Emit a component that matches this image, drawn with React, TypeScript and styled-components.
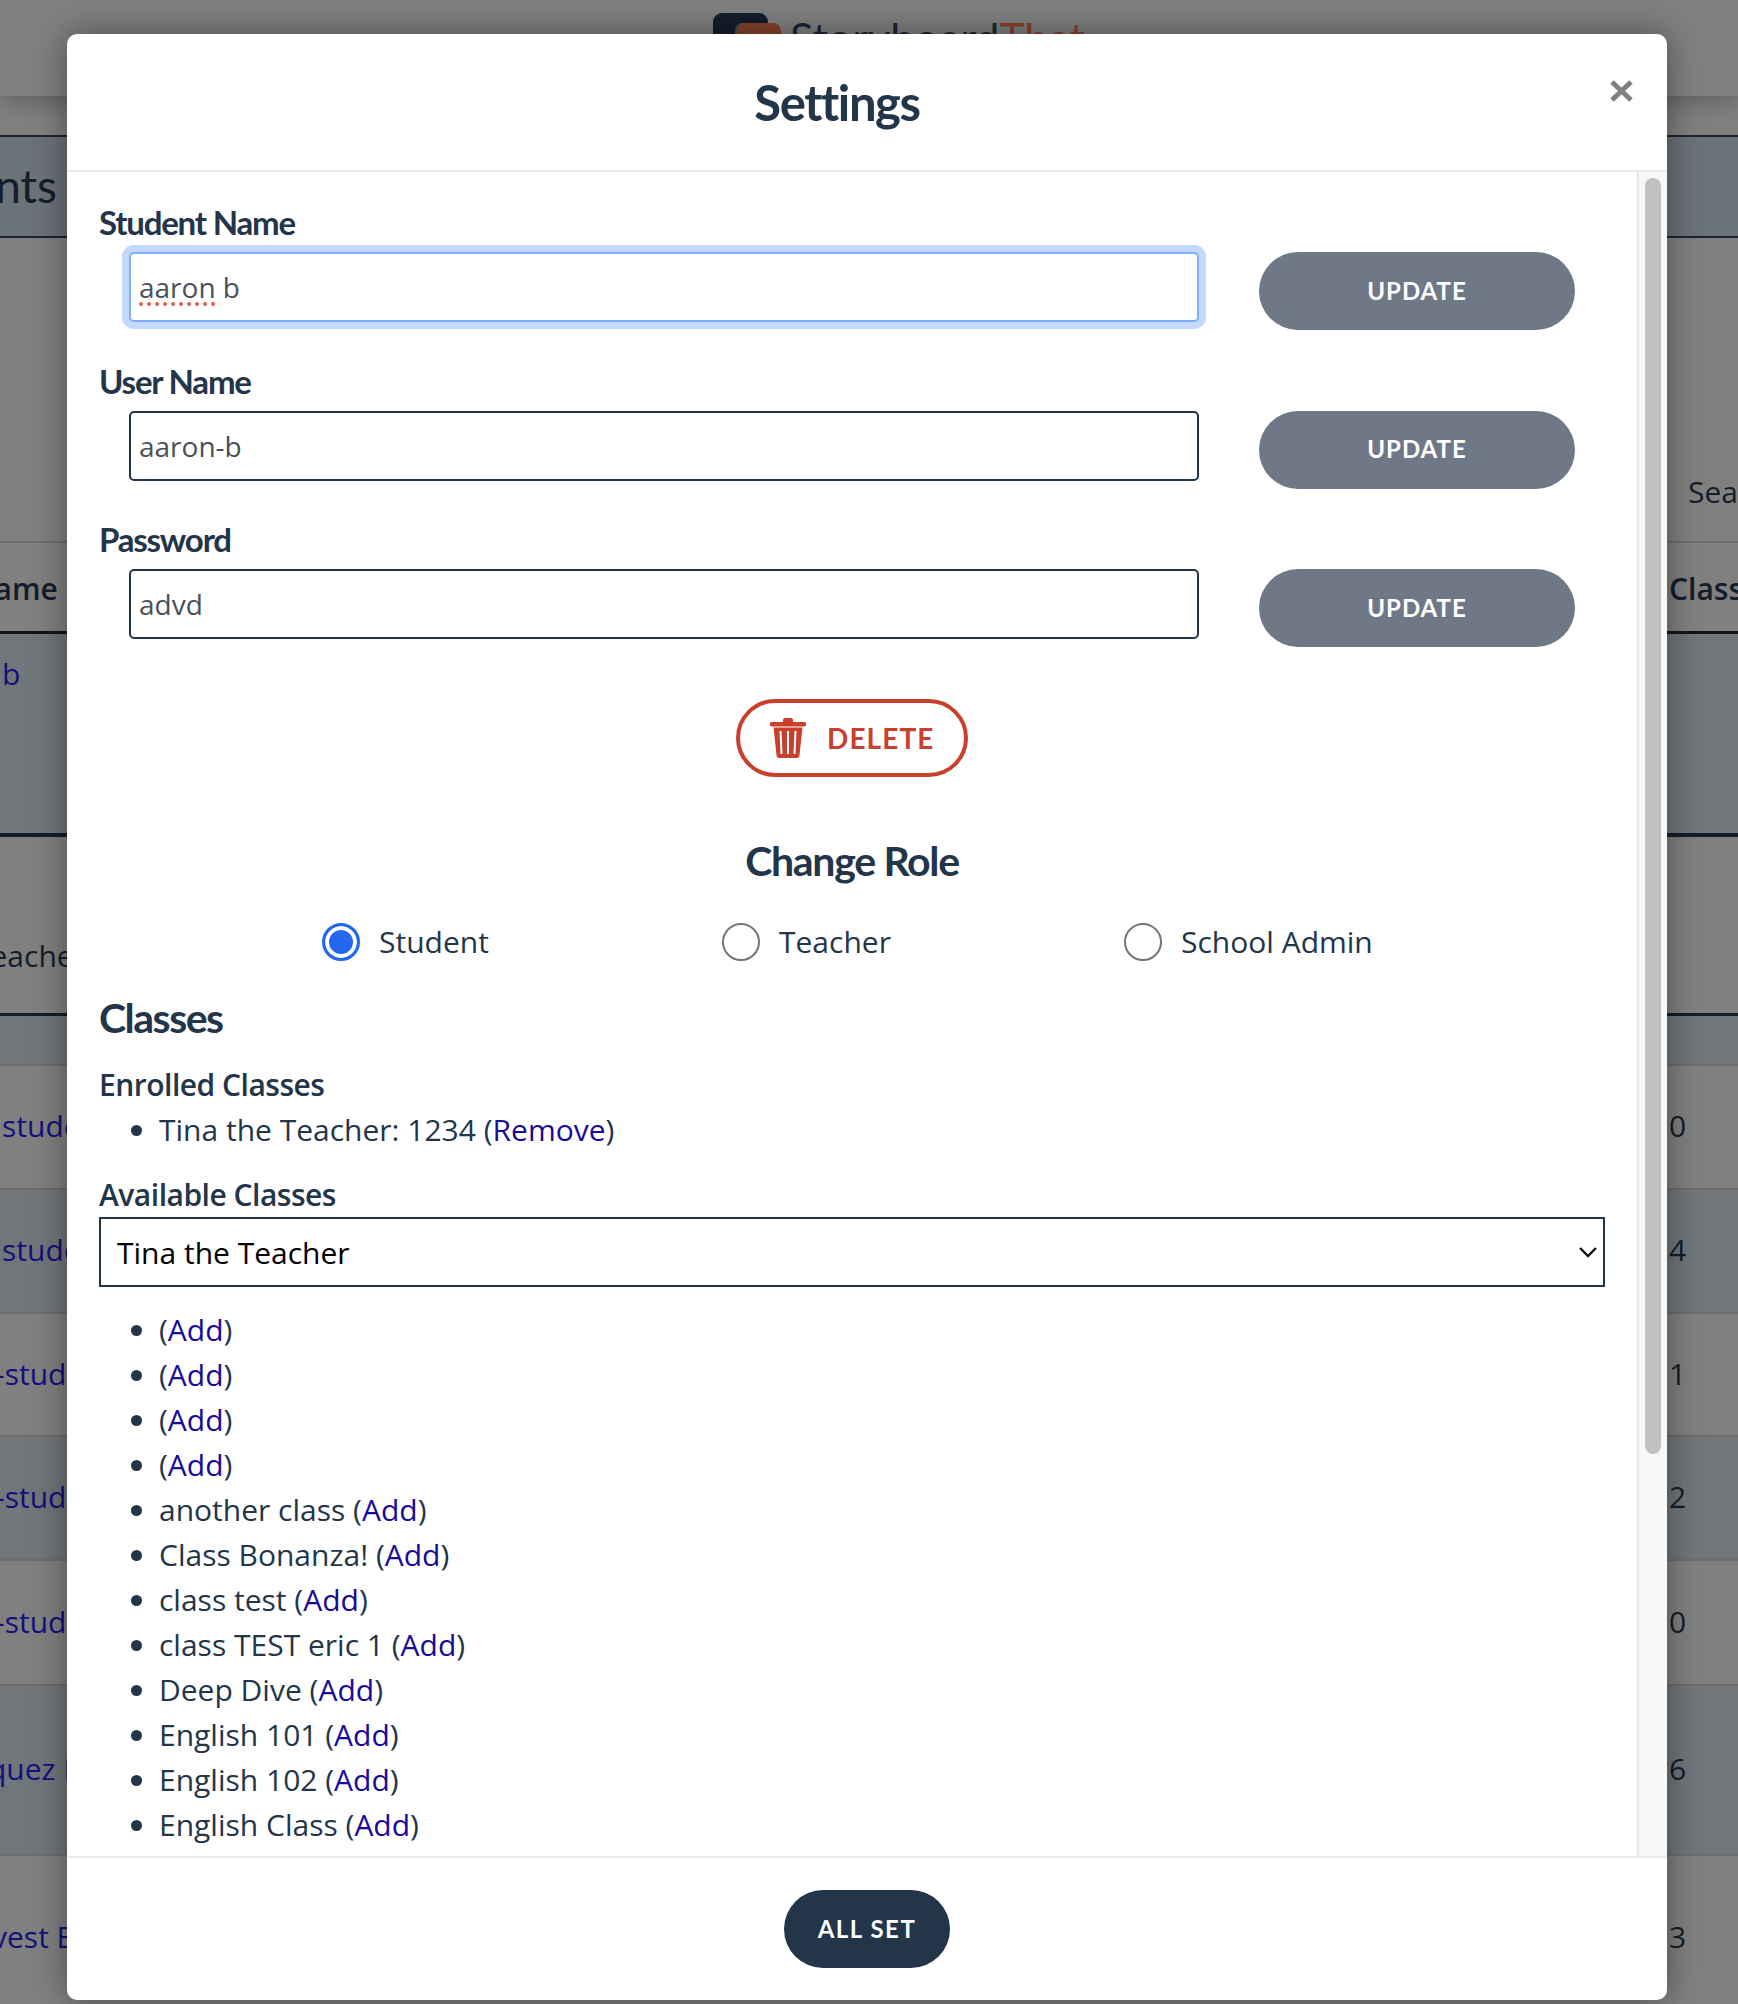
import React from "react"
import styled, { createGlobalStyle } from "styled-components"

const GlobalStyle = createGlobalStyle`
  html, body {
    margin: 0;
    padding: 0;
    background: #808080;
  }
  * {
    box-sizing: border-box;
  }
`

const SPage = styled.div`
  position: relative;
  width: 1738px;
  height: 2004px;
  overflow: hidden;
  font-family: "Open Sans", sans-serif;
  font-size: 30px;
  line-height: 45px;
  color: #141d2b;
`

const SNav = styled.div`
  position: relative;
  z-index: 1;
  height: 96px;
  padding: 13px 0 0 713px;
  display: flex;
  align-items: flex-start;
  background: #808080;
  box-shadow: 0 4px 24px rgba(0, 0, 0, 0.28);
`

const SLogoMark = styled.div`
  position: relative;
  width: 55px;
  height: 60px;
  margin-right: 22px;
  border-radius: 9px;
  background: #141d2b;
`

const SLogoInner = styled.div`
  position: absolute;
  top: 10px;
  left: 22px;
  width: 46px;
  height: 40px;
  border-radius: 8px;
  background: #83432c;
  border-left: 3px solid #4b4b4b;
`

const SLogoText = styled.div`
  margin-top: 2px;
  font-family: Lato, sans-serif;
  font-size: 43.2px;
  line-height: 44px;
  color: #1b2634;
`

const SLogoAccent = styled.span`
  color: #83432c;
`

const SBanner = styled.div`
  height: 103px;
  margin-top: 39px;
  padding-bottom: 2px;
  display: flex;
  align-items: center;
  justify-content: flex-start;
  border-top: 2px solid #1a2533;
  border-bottom: 2px solid #1a2533;
  background: #6b7278;
`

const SBannerTitle = styled.div`
  width: 57px;
  display: flex;
  justify-content: flex-end;
  white-space: nowrap;
  font-family: Lato, sans-serif;
  font-size: 46px;
  line-height: 50px;
`

const SSearchRow = styled.div`
  height: 305px;
  padding: 231px 0 0 1688px;
  border-bottom: 2px solid #6e6e6e;
  white-space: nowrap;
`

const STableRow = styled.div<{ $height: number; $band?: boolean; $line?: string; $pad?: string }>`
  height: ${(p) => p.$height}px;
  padding: ${(p) => p.$pad || "0 0 3px"};
  display: flex;
  align-items: center;
  white-space: nowrap;
  background: ${(p) => (p.$band ? "#71767a" : "#808080")};
  border-bottom: ${(p) => p.$line || "2px solid #6e6e6e"};
`

const SLeftCell = styled.div<{ $shift?: number; $link?: boolean; $strong?: boolean }>`
  width: ${(p) => 1669 - (p.$shift || 0)}px;
  margin-left: ${(p) => p.$shift || 0}px;
  flex-shrink: 0;
  color: ${(p) => (p.$link ? "#14107a" : "#141d2b")};
  font-weight: ${(p) => (p.$strong ? 600 : 400)};
`

const SRightCell = styled.div<{ $strong?: boolean }>`
  flex: 1;
  font-weight: ${(p) => (p.$strong ? 600 : 400)};
`

const SModal = styled.div`
  position: absolute;
  z-index: 2;
  top: 34px;
  left: 67px;
  width: 1600px;
  height: 1966px;
  display: flex;
  flex-direction: column;
  border-radius: 10px;
  background: #ffffff;
  color: #233549;
  box-shadow: 0 0 34px rgba(0, 0, 0, 0.42);
`

const SModalHeader = styled.div`
  position: relative;
  flex-shrink: 0;
  height: 138px;
  padding-right: 60px;
  display: flex;
  align-items: center;
  justify-content: center;
  border-bottom: 2px solid #e8eaed;
`

const STitle = styled.h1`
  margin: 0;
  font-family: Lato, sans-serif;
  font-size: 49px;
  font-weight: 700;
  letter-spacing: -1.4px;
  line-height: 60px;
`

const SClose = styled.button`
  position: absolute;
  top: 45px;
  right: 33px;
  width: 25px;
  height: 24px;
  padding: 0;
  border: 0;
  background: none;
  display: flex;
  cursor: pointer;
`

const SModalMiddle = styled.div`
  flex: 1;
  min-height: 0;
  display: flex;
`

const SModalBody = styled.div`
  flex: 1;
  min-width: 0;
  padding: 34px 32px 0;
  overflow: hidden;
`

const SScrollTrack = styled.div`
  flex-shrink: 0;
  width: 30px;
  padding: 6px 6px 0;
  background: #f8f8f8;
  border-left: 2px solid #e8e8e8;
`

const SScrollThumb = styled.div`
  height: 1276px;
  border-radius: 8px;
  background: #c1c1c1;
`

const SFieldLabel = styled.label`
  display: block;
  height: 48px;
  margin-top: -5px;
  padding-bottom: 5px;
  font-family: Lato, sans-serif;
  font-size: 33px;
  font-weight: 700;
  line-height: 43px;
  letter-spacing: -1.2px;
`

const SFieldRow = styled.div`
  display: flex;
  align-items: flex-start;
  gap: 60px;
  height: 78px;
  margin-top: 3px;
  margin-bottom: 34.5px;
  padding-left: 30px;
`

const SInputWrap = styled.div`
  position: relative;
  width: 1070px;
`

const SInput = styled.input<{ $focused?: boolean }>`
  display: block;
  width: 100%;
  height: 70px;
  padding: 0 8px;
  border: 2px solid ${(p) => (p.$focused ? "#80b0fb" : "#233549")};
  border-radius: 5px;
  outline: none;
  background: #fff;
  color: #495057;
  font-family: "Open Sans", sans-serif;
  font-size: 28px;
  box-shadow: ${(p) => (p.$focused ? "0 0 0 7px #c3d8fc" : "none")};
`

const SSpellMark = styled.div`
  position: absolute;
  top: 50px;
  left: 10px;
  width: 76px;
  height: 4px;
  background: radial-gradient(circle at 2px 2px, #f0614f 1.7px, transparent 2px) 0 0 / 8px 4px repeat-x;
`

const SUpdateButton = styled.button`
  width: 316px;
  height: 78px;
  padding: 0 0 2px;
  border: 0;
  border-radius: 39px;
  background: #6f7887;
  color: #fff;
  font-family: Lato, sans-serif;
  font-size: 24px;
  font-weight: 700;
  letter-spacing: 1px;
  cursor: pointer;
`

const SDeleteRow = styled.div`
  display: flex;
  justify-content: center;
  margin-top: 52px;
`

const SDeleteButton = styled.button`
  display: flex;
  align-items: center;
  width: 232px;
  height: 78px;
  padding: 0 0 0 30px;
  border: 4px solid #c8402e;
  border-radius: 39px;
  background: #fff;
  color: #c8402e;
  font-family: Lato, sans-serif;
  font-size: 28px;
  font-weight: 700;
  letter-spacing: 1.1px;
  cursor: pointer;
`

const SDeleteLabel = styled.span`
  margin-left: 21px;
`

const SRoleHeading = styled.h2`
  margin: 59px 0 0;
  text-align: center;
  font-family: Lato, sans-serif;
  font-size: 41px;
  font-weight: 700;
  line-height: 50px;
  letter-spacing: -1.3px;
`

const SRoleRow = styled.div`
  display: grid;
  grid-template-columns: 400px 402px 1fr;
  margin-top: 33px;
  padding-left: 223px;
`

const SRoleOption = styled.label`
  display: flex;
  align-items: center;
  gap: 19px;
`

const SRadio = styled.input`
  appearance: none;
  width: 38px;
  height: 38px;
  margin: 0;
  border: 2px solid #757575;
  border-radius: 50%;
  background: #fff;

  &:checked {
    border: 3px solid #2468f2;
    background: #2468f2;
    box-shadow: inset 0 0 0 4px #fff;
  }
`

const SClassesHeading = styled.h2`
  margin: 29px 0 0;
  font-family: Lato, sans-serif;
  font-size: 41px;
  font-weight: 700;
  line-height: 50px;
  letter-spacing: -1.5px;
`

const SSubHeading = styled.h3`
  margin: 0;
  font-size: 30px;
  font-weight: 600;
  line-height: 45px;
  letter-spacing: -0.5px;
`

const SEnrolledHeading = styled(SSubHeading)`
  margin-top: 19px;
`

const SList = styled.ul`
  margin: 0;
  padding: 0 0 0 60px;
  list-style: disc;
`

const SLink = styled.a`
  color: #1a0a9a;
  text-decoration: none;
`

const SAvailableHeading = styled(SSubHeading)`
  margin-top: 20px;
`

const SSelectBox = styled.div`
  display: flex;
  align-items: center;
  justify-content: space-between;
  width: 1506px;
  height: 70px;
  margin-bottom: 19.5px;
  padding: 0 5px 0 16px;
  border: 2px solid #233549;
  color: #000;
`

const SModalFooter = styled.div`
  flex-shrink: 0;
  height: 144px;
  display: flex;
  align-items: center;
  justify-content: center;
  border-top: 2px solid #e8eaed;
`

const SAllSetButton = styled.button`
  width: 166px;
  height: 78px;
  padding: 0 0 2px;
  border: 0;
  border-radius: 39px;
  background: #233549;
  color: #fff;
  font-family: Lato, sans-serif;
  font-size: 24px;
  font-weight: 700;
  letter-spacing: 1.5px;
  cursor: pointer;
`

const rows = [
  { height: 124, band: false, left: "student", right: "0", shift: 2 },
  { height: 124, band: true, left: "student", right: "4", shift: 2 },
  { height: 123, band: false, left: "-student", right: "1", shift: -5 },
  { height: 124, band: true, left: "-student", right: "2", shift: -5 },
  { height: 125, band: false, left: "-student", right: "0", shift: -5 },
  { height: 170, band: true, left: "quez Rodriguez", right: "6", shift: -12 },
]

const fields = [
  { label: "Student Name", value: "aaron b", focused: true },
  { label: "User Name", value: "aaron-b" },
  { label: "Password", value: "advd" },
]

const available = [
  "",
  "",
  "",
  "",
  "another class",
  "Class Bonanza!",
  "class test",
  "class TEST eric 1",
  "Deep Dive",
  "English 101",
  "English 102",
  "English Class",
]

function TrashIcon() {
  return (
    <svg width="36" height="40" viewBox="0 0 36 40" fill="#c8402e">
      <path d="M13 4V2a2 2 0 0 1 2-2h6a2 2 0 0 1 2 2v2h11a2 2 0 0 1 2 2.2 2 2 0 0 1-2 2.3H2A2 2 0 0 1 0 6.2 2 2 0 0 1 2 4z" />
      <path
        fillRule="evenodd"
        d="M3.5 9.5h29L29.5 37a3 3 0 0 1-3 3h-17a3 3 0 0 1-3-3zM9.5 13l1 23h2l-1-23zM17 13v23h2V13zM24.5 13l-1 23h2l1-23z"
      />
    </svg>
  )
}

export default function App() {
  return (
    <SPage>
      <GlobalStyle />
      <SNav>
        <SLogoMark>
          <SLogoInner />
        </SLogoMark>
        <SLogoText>
          Storyboard<SLogoAccent>That</SLogoAccent>
        </SLogoText>
      </SNav>
      <SBanner>
        <SBannerTitle>Students</SBannerTitle>
      </SBanner>
      <SSearchRow>Search</SSearchRow>
      <STableRow $height={91} $line="3px solid #10161f" $pad="2px 0 0">
        <SLeftCell $shift={-29} $strong>
          Name
        </SLeftCell>
        <SRightCell $strong>Class</SRightCell>
      </STableRow>
      <STableRow $height={203} $band $line="4px solid #141d2b" $pad="0 0 120px">
        <SLeftCell $shift={2} $link>
          b
        </SLeftCell>
      </STableRow>
      <STableRow $height={179} $line="3px solid #141d2b" $pad="60px 0 0">
        <SLeftCell $shift={-26}>Teacher</SLeftCell>
      </STableRow>
      <STableRow $height={50} $band />
      {rows.map((row, i) => (
        <STableRow key={i} $height={row.height} $band={row.band}>
          <SLeftCell $shift={row.shift} $link>
            {row.left}
          </SLeftCell>
          <SRightCell>{row.right}</SRightCell>
        </STableRow>
      ))}
      <STableRow $height={151} $line="none" $pad="10px 0 0">
        <SLeftCell $shift={-8} $link>
          vest Elementary
        </SLeftCell>
        <SRightCell>3</SRightCell>
      </STableRow>

      <SModal>
        <SModalHeader>
          <STitle>Settings</STitle>
          <SClose aria-label="Close">
            <svg width="25" height="24" viewBox="0 0 25 24">
              <path d="M3 3l19 18M22 3L3 21" stroke="#7f7f7f" strokeWidth="5" fill="none" />
            </svg>
          </SClose>
        </SModalHeader>
        <SModalMiddle>
          <SModalBody>
            {fields.map((field) => (
              <div key={field.label}>
                <SFieldLabel>{field.label}</SFieldLabel>
                <SFieldRow>
                  <SInputWrap>
                    <SInput $focused={field.focused} defaultValue={field.value} />
                    {field.focused && <SSpellMark />}
                  </SInputWrap>
                  <SUpdateButton>UPDATE</SUpdateButton>
                </SFieldRow>
              </div>
            ))}
            <SDeleteRow>
              <SDeleteButton>
                <TrashIcon />
                <SDeleteLabel>DELETE</SDeleteLabel>
              </SDeleteButton>
            </SDeleteRow>
            <SRoleHeading>Change Role</SRoleHeading>
            <SRoleRow>
              <SRoleOption>
                <SRadio type="radio" name="role" defaultChecked />
                Student
              </SRoleOption>
              <SRoleOption>
                <SRadio type="radio" name="role" />
                Teacher
              </SRoleOption>
              <SRoleOption>
                <SRadio type="radio" name="role" />
                School Admin
              </SRoleOption>
            </SRoleRow>
            <SClassesHeading>Classes</SClassesHeading>
            <SEnrolledHeading>Enrolled Classes</SEnrolledHeading>
            <SList>
              <li>
                Tina the Teacher: 1234 (<SLink href="#">Remove</SLink>)
              </li>
            </SList>
            <SAvailableHeading>Available Classes</SAvailableHeading>
            <SSelectBox>
              Tina the Teacher
              <svg width="20" height="12" viewBox="0 0 20 12">
                <path d="M2 2l8 8 8-8" stroke="#111" strokeWidth="2.4" fill="none" />
              </svg>
            </SSelectBox>
            <SList>
              {available.map((name, i) => (
                <li key={i}>
                  {name ? `${name} ` : ""}(<SLink href="#">Add</SLink>)
                </li>
              ))}
            </SList>
          </SModalBody>
          <SScrollTrack>
            <SScrollThumb />
          </SScrollTrack>
        </SModalMiddle>
        <SModalFooter>
          <SAllSetButton>ALL SET</SAllSetButton>
        </SModalFooter>
      </SModal>
    </SPage>
  )
}
